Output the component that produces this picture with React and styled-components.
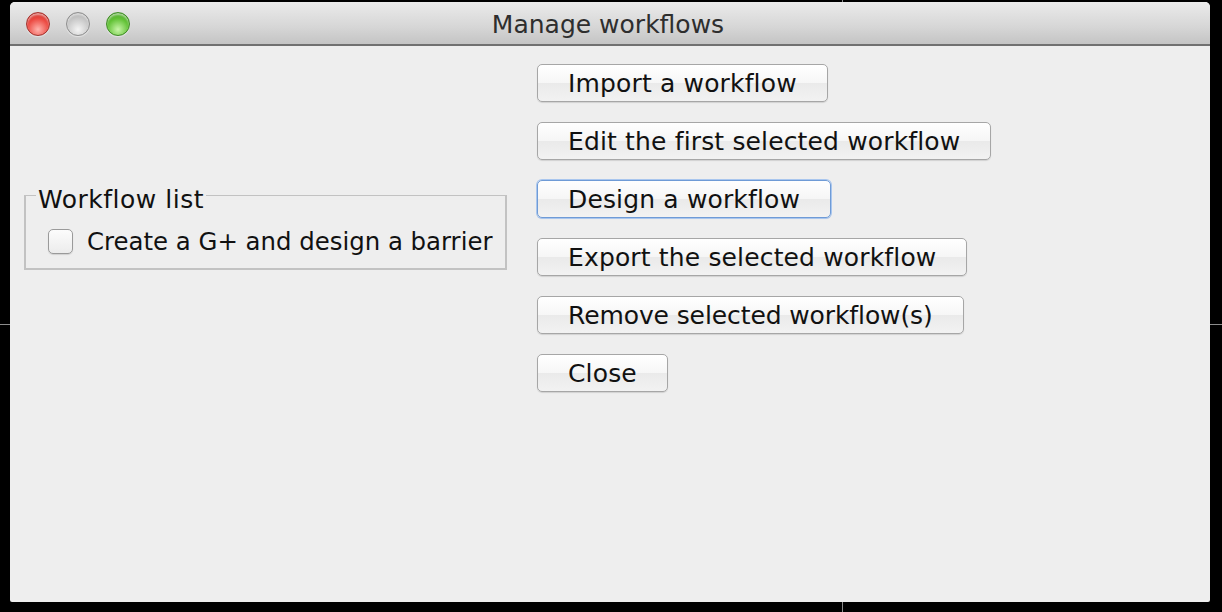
import React from "react";
import styled, { createGlobalStyle } from "styled-components";

const Global = createGlobalStyle`
  html, body {
    margin: 0;
    padding: 0;
    background: #000;
  }
  body {
    font-family: "DejaVu Sans", "Liberation Sans", sans-serif;
  }
`;

const Screen = styled.div`
  position: relative;
  width: 1222px;
  height: 612px;
  padding: 2px 0 0 10px;
  box-sizing: border-box;
  overflow: hidden;
`;

const Guide = styled.div`
  position: absolute;
  background: #8c8c8c;
  ${(p) =>
    p.vertical
      ? `left: ${p.at}px; top: 0; bottom: 0; width: 1px;`
      : `top: ${p.at}px; left: 0; right: 0; height: 1px;`}
  z-index: 0;
`;

const Window = styled.div`
  position: relative;
  z-index: 1;
  width: 1200px;
  height: 600px;
  background: #eeeeee;
  border-radius: 5px 5px 2px 2px;
  display: flex;
  flex-direction: column;
  overflow: hidden;
`;

const TitleBar = styled.div`
  height: 42px;
  flex: none;
  display: flex;
  align-items: center;
  position: relative;
  background: linear-gradient(#ebebeb, #d6d6d6 60%, #c4c4c4);
  border-bottom: 2px solid #707070;
`;

const Lights = styled.div`
  display: flex;
  gap: 16px;
  padding-left: 16px;
  position: absolute;
  left: 0;
  top: 10px;
`;

const Light = styled.div`
  width: 24px;
  height: 24px;
  box-sizing: border-box;
  border-radius: 50%;
  border: 1px solid ${(p) => p.edge};
  background: radial-gradient(
    circle at 50% 75%,
    ${(p) => p.glow} 0%,
    ${(p) => p.base} 55%,
    ${(p) => p.dark} 100%
  );
  box-shadow: inset 0 2px 2px rgba(255, 255, 255, 0.55), 0 1px 1px rgba(255, 255, 255, 0.5);
`;

const Title = styled.div`
  flex: 1;
  text-align: center;
  font-size: 25px;
  color: #2e2e2e;
  padding: 2px 4px 0 0;
`;

const Body = styled.div`
  display: flex;
  align-items: center;
  padding: 18px 0 0 14px;
  gap: 30px;
`;

const Group = styled.fieldset`
  margin: 0 0 9px 0;
  width: 483px;
  box-sizing: border-box;
  border: 2px solid #c2c2c2;
  border-top-width: 1px;
  padding: 13px 0 12px 22px;
  min-width: 0;
`;

const Legend = styled.legend`
  font-size: 25px;
  letter-spacing: 0.5px;
  color: #111;
  padding: 8px 2px 0;
  margin-left: -12px;
`;

const CheckRow = styled.label`
  display: flex;
  align-items: center;
  gap: 14px;
  font-size: 24.4px;
  color: #111;
`;

const Box = styled.span`
  width: 25px;
  height: 25px;
  flex: none;
  box-sizing: border-box;
  border-radius: 5px;
  border: 1px solid #9a9a9a;
  background: linear-gradient(#fcfcfc, #ececec);
  box-shadow: 0 1px 1px rgba(0, 0, 0, 0.12);
`;

const Buttons = styled.div`
  display: flex;
  flex-direction: column;
  align-items: flex-start;
  gap: 20px;
`;

const Button = styled.button`
  height: 38px;
  padding: 0 30px;
  font-family: "DejaVu Sans", "Liberation Sans", sans-serif;
  font-size: 25px;
  letter-spacing: ${(p) => p.spacing || 0.15}px;
  color: #111;
  border-radius: 5px;
  border: 1px solid ${(p) => (p.focused ? "#6f9bd6" : "#a6a6a6")};
  background: linear-gradient(#ffffff, #f6f6f6 50%, #eaeaea 51%, #f2f2f2);
  box-shadow: ${(p) =>
    p.focused ? "0 0 0 1px #a9c6ee, 0 1px 1px rgba(0,0,0,0.1)" : "0 1px 1px rgba(0,0,0,0.12)"};
  white-space: nowrap;
`;

const buttons = [
  { label: "Import a workflow" },
  { label: "Edit the first selected workflow" },
  { label: "Design a workflow", focused: true },
  { label: "Export the selected workflow" },
  { label: "Remove selected workflow(s)", spacing: -0.1 },
  { label: "Close" },
];

export default function App() {
  return (
    <Screen>
      <Global />
      <Guide vertical at={842} />
      <Guide at={324} />
      <Window>
        <TitleBar>
          <Lights>
            <Light edge="#a3332e" glow="#ffb3ad" base="#ec4a42" dark="#b8231d" />
            <Light edge="#8e8e8e" glow="#f4f4f4" base="#c9c9c9" dark="#9c9c9c" />
            <Light edge="#3f8c25" glow="#c8f5a8" base="#62c236" dark="#3c901d" />
          </Lights>
          <Title>Manage workflows</Title>
        </TitleBar>
        <Body>
          <Group>
            <Legend>Workflow list</Legend>
            <CheckRow>
              <Box />
              Create a G+ and design a barrier
            </CheckRow>
          </Group>
          <Buttons>
            {buttons.map((b) => (
              <Button key={b.label} focused={b.focused} spacing={b.spacing}>
                {b.label}
              </Button>
            ))}
          </Buttons>
        </Body>
      </Window>
    </Screen>
  );
}
